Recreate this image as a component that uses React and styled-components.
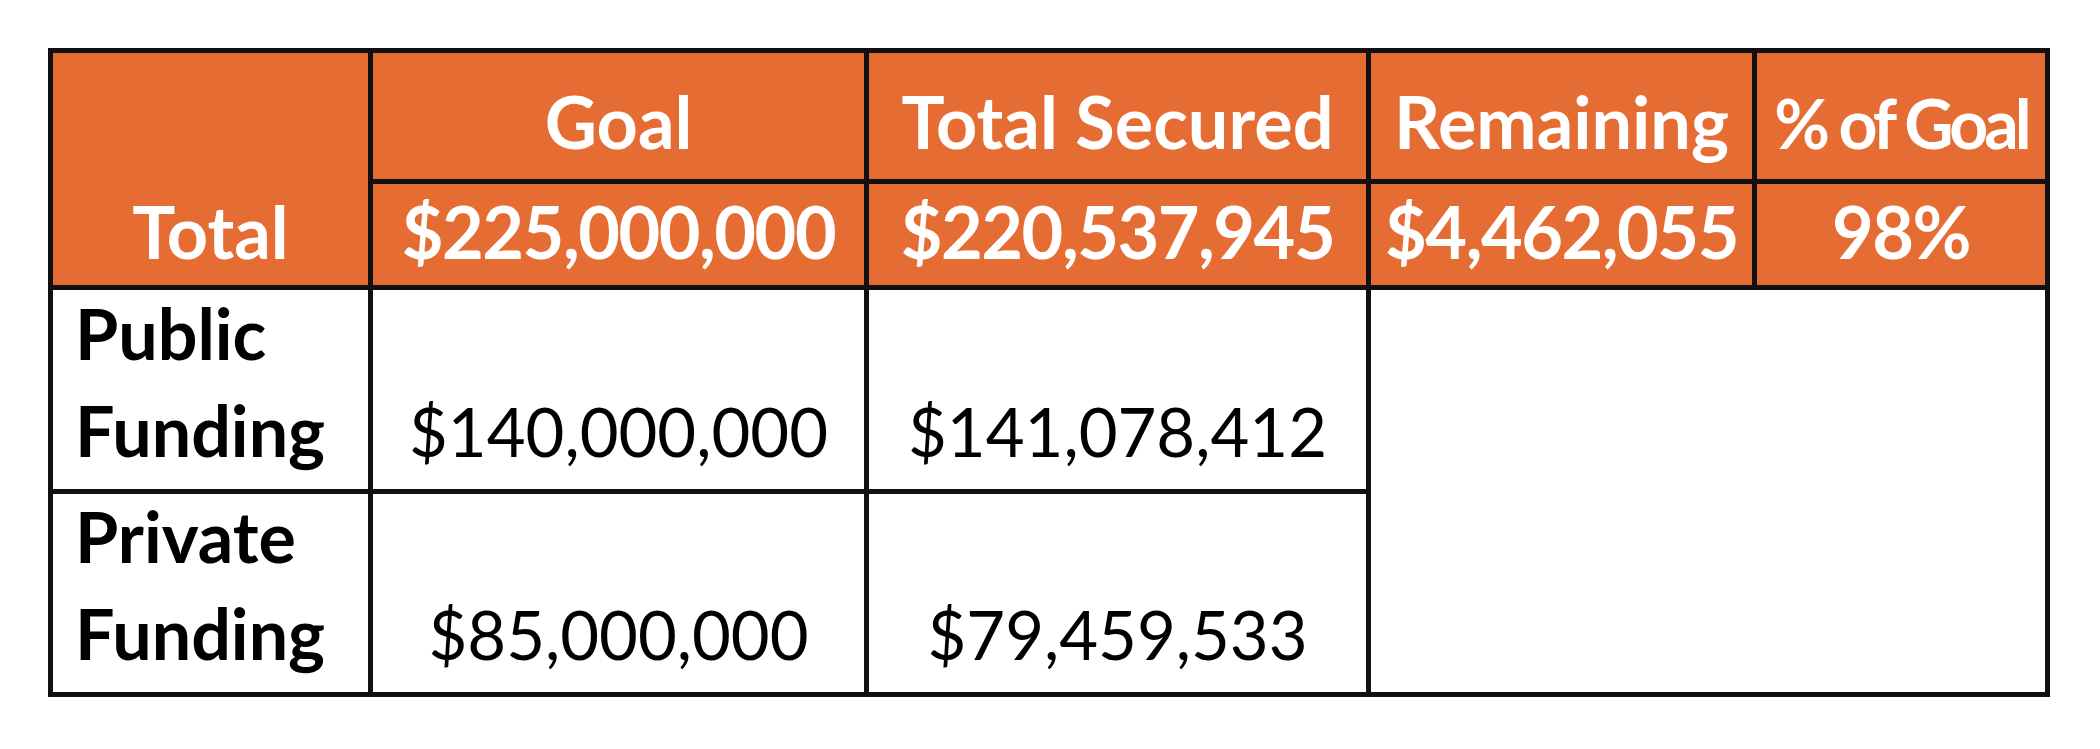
import styled, { createGlobalStyle } from 'styled-components';

const GlobalStyle = createGlobalStyle`
	html, body {
		margin: 0;
		padding: 0;
		background: #ffffff;
	}
	body {
		font-family: Lato, "Open Sans", "Liberation Sans", sans-serif;
	}
`;

const Page = styled.div`
	padding: 48px 0 0 48px;
`;

const Table = styled.table`
	border-collapse: collapse;
	table-layout: fixed;
	width: 2002px;
	border: 5px solid #111;
`;

const Row = styled.tr`
	height: ${({ $h }) => $h}px;
`;

const HeadCell = styled.td`
	background: #e56d34;
	color: #fff;
	border: 5px solid #111;
	font-weight: 700;
	font-size: ${({ $fs }) => $fs || 72}px;
	line-height: 1.2;
	text-align: center;
	vertical-align: bottom;
	white-space: nowrap;
	padding: 0 0 ${({ $pb }) => $pb}px;
	letter-spacing: ${({ $ls }) => $ls || 0}px;
	overflow: hidden;
`;

const LabelCell = styled.td`
	border: 5px solid #111;
	color: #000;
	font-weight: 700;
	font-size: 70px;
	text-align: left;
	vertical-align: bottom;
	padding: 0 0 17px 22px;
`;

const LabelLine = styled.span`
	display: block;
	line-height: 84px;
	& + & {
		margin-top: 13px;
	}
`;

const ValueCell = styled.td`
	border: 5px solid #111;
	color: #000;
	font-size: 67px;
	line-height: 80px;
	text-align: center;
	vertical-align: bottom;
	white-space: nowrap;
	padding: 0 0 18px;
`;

const EmptyCell = styled.td`
	border: 5px solid #111;
	background: #fff;
`;

const columns = [320, 496, 502, 386, 293];

const headers = [
	{ text: 'Goal' },
	{ text: 'Total Secured' },
	{ text: 'Remaining' },
	{ text: '% of Goal', fs: 68, ls: -4 },
];
const totals = ['$225,000,000', '$220,537,945', '$4,462,055', '98%'];

const rows = [
	{ label: ['Public', 'Funding'], goal: '$140,000,000', secured: '$141,078,412', h: 204 },
	{ label: ['Private', 'Funding'], goal: '$85,000,000', secured: '$79,459,533', h: 203 },
];

export default function App() {
	return (
		<Page>
			<GlobalStyle />
			<Table>
				<colgroup>
					{columns.map((w, i) => (
						<col key={i} style={{ width: w }} />
					))}
				</colgroup>
				<tbody>
					<Row $h={131}>
						<HeadCell rowSpan={2} $pb={11}>
							Total
						</HeadCell>
						{headers.map((h) => (
							<HeadCell key={h.text} $pb={15} $fs={h.fs} $ls={h.ls}>
								{h.text}
							</HeadCell>
						))}
					</Row>
					<Row $h={106}>
						{totals.map((t) => (
							<HeadCell key={t} $pb={11} $ls={-1.5}>
								{t}
							</HeadCell>
						))}
					</Row>
					{rows.map((r, i) => (
						<Row key={r.goal} $h={r.h}>
							<LabelCell>
								{r.label.map((l) => (
									<LabelLine key={l}>{l}</LabelLine>
								))}
							</LabelCell>
							<ValueCell>{r.goal}</ValueCell>
							<ValueCell>{r.secured}</ValueCell>
							{i === 0 && <EmptyCell colSpan={2} rowSpan={2} />}
						</Row>
					))}
				</tbody>
			</Table>
		</Page>
	);
}
